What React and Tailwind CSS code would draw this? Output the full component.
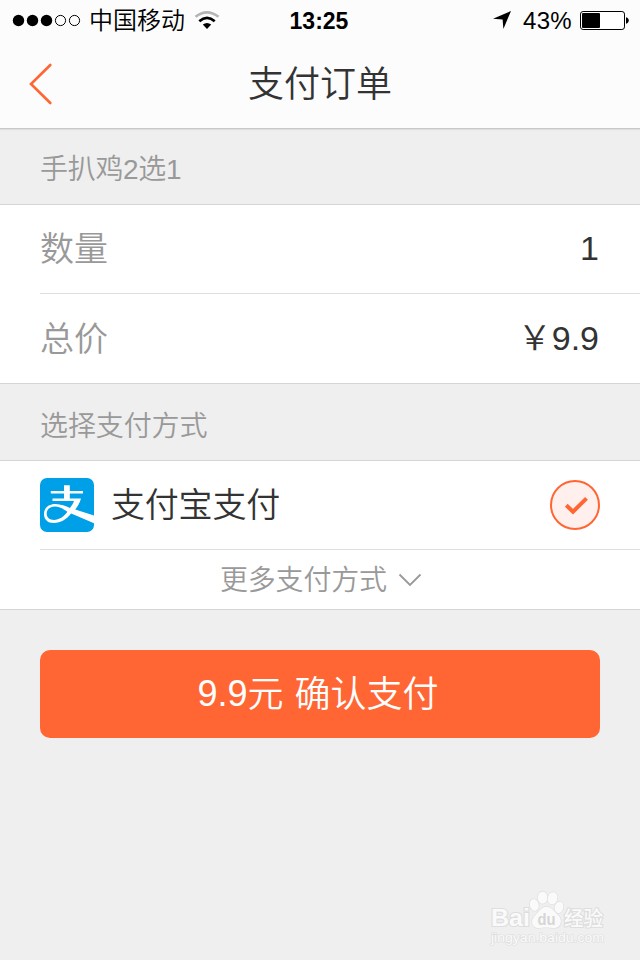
import React, { useState } from 'react';

const SignalDots = () => (
  <svg width="70" height="14" viewBox="0 0 70 14" className="ml-3 shrink-0">
    <circle cx="6.5" cy="7.5" r="5.7" />
    <circle cx="20.5" cy="7.5" r="5.7" />
    <circle cx="34.5" cy="7.5" r="5.7" />
    <circle cx="48.5" cy="7.5" r="5.1" fill="none" stroke="#000" />
    <circle cx="62.5" cy="7.5" r="5.1" fill="none" stroke="#000" />
  </svg>
);

const WifiIcon = () => (
  <svg width="26" height="20" viewBox="0 0 26 20" fill="none" strokeWidth="2.8" className="shrink-0">
    <path d="M1.5 6.8Q13 -2 24.5 6.8" stroke="#b5b5b5" strokeWidth="2.6" />
    <path d="M5.3 11.2Q13 4.6 20.7 11.2" stroke="#000" />
    <path d="M8.8 14.6Q13 11.4 17.2 14.6L13 19Z" fill="#000" />
  </svg>
);

const LocationIcon = () => (
  <svg width="18" height="18" viewBox="0 0 18 18">
    <path d="M18 0L0 7.8L9.6 8.6L10.4 18Z" />
  </svg>
);

const BatteryIcon = () => (
  <svg width="49" height="19" viewBox="0 0 49 19">
    <rect x="0.5" y="0.5" width="44" height="18" rx="2.6" fill="#fff" stroke="#000" />
    <rect x="2" y="2" width="18" height="15" rx="1" />
    <path d="M46 6.3C49.7 7 49.7 12 46 12.7Z" />
  </svg>
);

const AlipayLogo = () => (
  <svg width="54" height="54" viewBox="0 0 54 54">
    <rect width="54" height="54" rx="7" fill="#00a0e9" />
    <path d="M24 7.2H29.8V13H43V15.6H29.8V21.2H24V15.6H10.8V13H24Z" fill="#fff" />
    <path
      d="M12.5 20.6H41C39.5 25.5 37.6 28.7 35.2 31.5L54 37.6V45.2L31.2 35.6C26.5 41.5 20.5 45 14 45C7.5 45 4 41.6 4 36C4 30 8.5 26 15.5 26C20.5 26 26 28.3 30 29.9C31.6 28 33 25.8 34 23.1H12.5ZM15 28.6C9.8 28.6 6.7 31.5 6.7 35.6C6.7 39.7 9.6 42 14 42C19 42 24.1 38.6 27.4 33.8C23.4 31 19.3 28.6 15 28.6Z"
      fill="#fff"
      fillRule="evenodd"
    />
  </svg>
);

const Watermark = () => (
  <svg width="122" height="60" viewBox="0 0 122 60" className="absolute left-[488px] top-[888px]">
    <g fill="#fafafa" stroke="#dedede" strokeWidth="1.2" paintOrder="stroke">
      <ellipse cx="46.3" cy="17" rx="4.4" ry="6" transform="rotate(-14 46.3 17)" />
      <ellipse cx="54.6" cy="9.6" rx="4.8" ry="6.2" />
      <ellipse cx="64.6" cy="10.3" rx="4.8" ry="6.2" transform="rotate(12 64.6 10.3)" />
      <ellipse cx="71" cy="19.4" rx="4.3" ry="5.8" transform="rotate(16 71 19.4)" />
      <path d="M58.5 18.7C64 18.7 66 23.5 70 27C75 31.5 73 39.7 67 39.9C63.5 40 61 39.4 58 39.4C54.5 39.4 52 40 49 39.9C43.5 39.2 42.5 32 46.5 28C50.5 24.2 53 18.7 58.5 18.7Z" />
      <text x="3" y="37.5" fontSize="23.5" fontWeight="bold" textLength="39" lengthAdjust="spacingAndGlyphs" strokeWidth="2.2">Bai</text>
      <text x="76" y="37.5" fontSize="20" fontWeight="500" textLength="39" lengthAdjust="spacingAndGlyphs" strokeWidth="2.2">经验</text>
      <text x="3" y="53.5" fontSize="13" textLength="113" lengthAdjust="spacingAndGlyphs">jingyan.baidu.com</text>
    </g>
    <text x="49.5" y="37" fontSize="17" fontWeight="bold" fill="#d6d6d6" textLength="18" lengthAdjust="spacingAndGlyphs">du</text>
  </svg>
);

const App = () => {
  const [selected, setSelected] = useState(true);

  const order = {
    name: '手扒鸡2选1',
    quantity: 1,
    total: '9.9'
  };

  return (
    <div className="relative w-[640px] h-[960px] overflow-hidden bg-[#efefef] font-['Liberation_Sans','Noto_Sans_CJK_SC',sans-serif] font-[350] text-[#333]">
      {/* Status bar */}
      <div className="grid grid-cols-3 items-center h-10 bg-[#fcfcfc] text-black text-2xl leading-9">
        <div className="flex items-center">
          <SignalDots />
          <span className="ml-[7px] mr-[9px] pt-px whitespace-nowrap">中国移动</span>
          <WifiIcon />
        </div>
        <div className="pt-0.5 pr-0.5 text-center text-[23px] font-bold">13:25</div>
        <div className="flex items-center justify-end pr-[11px]">
          <LocationIcon />
          <span className="ml-3 mr-2 pt-0.5 tracking-[0.3px]">43%</span>
          <BatteryIcon />
        </div>
      </div>

      {/* Header */}
      <div className="grid grid-cols-3 items-center h-[89px] border-b border-[#c8c8c8] bg-[#fcfcfc] shadow-[0_1px_1px_#dedede]">
        <button className="pl-[29px]">
          <svg width="24" height="42" viewBox="0 0 24 42" fill="none" stroke="#ff6633" strokeWidth="2.6" strokeLinecap="round">
            <path d="M21.3 2L2 21L21.3 40" />
          </svg>
        </button>
        <h1 className="pt-0.5 text-center text-4xl leading-[84px] font-[350]">支付订单</h1>
      </div>

      <div className="h-[75px] pl-10 text-[28px] leading-[82px] tracking-[-0.3px] text-[#999]">{order.name}</div>

      <div className="h-[180px] border-y border-[#d5d5d5] bg-white pl-10 text-[34px]">
        <div className="flex justify-between h-[89px] border-b border-[#dedede] pr-[41px] leading-[86px]">
          <span className="pt-px text-[#999]">数量</span>
          <span>{order.quantity}</span>
        </div>
        <div className="flex h-[89px] pr-[41px] leading-[88px]">
          <span className="pt-px text-[#999]">总价</span>
          <span className="ml-auto">{'\uFFE5'}</span>
          <span>{order.total}</span>
        </div>
      </div>

      <div className="h-[76px] pl-10 text-[28px] leading-[86px] tracking-[-0.1px] text-[#999]">选择支付方式</div>

      <div className="h-[150px] border-y border-[#d5d5d5] bg-white pl-10">
        <div className="flex items-center h-[89px] border-b border-[#dedede] pr-10">
          <AlipayLogo />
          <span className="ml-[17px] text-[34px] leading-[86px] tracking-[-0.2px]">支付宝支付</span>
          <button className="ml-auto" onClick={() => setSelected(!selected)}>
            <svg width="50" height="50" viewBox="0 0 50 50" fill="none" stroke="#ff6633">
              <circle cx="25" cy="25" r="24" fill="#fff0ed" strokeWidth="2" />
              {selected && <path d="M16.3 25.3L23 31.7L36.5 18.3" strokeWidth="4" />}
            </svg>
          </button>
        </div>
        <div className="flex items-center h-[59px] pl-[180px] text-[28px] leading-[56px] tracking-[-0.2px] text-[#999]">
          <span className="pt-[3px]">更多支付方式</span>
          <svg width="24" height="14" viewBox="0 0 24 14" fill="none" stroke="#999" strokeWidth="1.8" className="ml-[11px]">
            <path d="M1.5 1.5L12 12L22.5 1.5" />
          </svg>
        </div>
      </div>

      <button className="flex justify-center w-[560px] h-[88px] mx-auto mt-10 pr-1 rounded-[10px] bg-[#ff6633] text-4xl leading-[88px] font-[350] text-white">
        <span>{order.total}</span>
        <span className="pt-px [word-spacing:1px]">元 确认支付</span>
      </button>

      <Watermark />
    </div>
  );
};

export default App;
